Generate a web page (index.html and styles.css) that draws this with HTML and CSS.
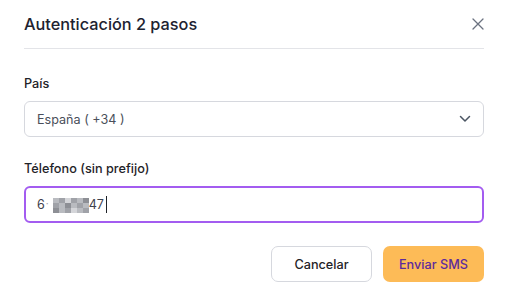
FILE: index.html
```html
<!DOCTYPE html>
<html lang="es">
<head>
    <meta charset="UTF-8">
    <meta name="viewport" content="width=device-width, initial-scale=1.0">
    <title>Autenticación 2 pasos</title>
    <link rel="stylesheet" href="styles.css">
</head>
<body>
    <div class="modal">
        <div class="modal-header">
            <h2>Autenticación 2 pasos</h2>
            <button class="close-btn" aria-label="Cerrar">
                <svg width="12" height="12" viewBox="0 0 12 12"><path d="M1 1L11 11M11 1L1 11" stroke="#6b7280" stroke-width="1.3" stroke-linecap="round"/></svg>
            </button>
        </div>
        <div class="modal-body">
            <div class="form-group">
                <label>País</label>
                <div class="select">
                    <span>España ( +34 )</span>
                    <svg width="12" height="8" viewBox="0 0 12 8"><path d="M1.5 1.5L6 6L10.5 1.5" fill="none" stroke="#4b5563" stroke-width="1.5" stroke-linecap="round" stroke-linejoin="round"/></svg>
                </div>
            </div>
            <div class="form-group">
                <label>Télefono (sin prefijo)</label>
                <div class="input focused">
                    <span class="digit">6</span><span class="dot">·</span>
                    <span class="mosaic">
                        <i class="m2"></i><i class="m3"></i><i class="m1"></i><i class="m3"></i><i class="m2"></i><i class="m4"></i>
                        <i class="m3"></i><i class="m2"></i><i class="m4"></i><i class="m2"></i><i class="m3"></i><i class="m2"></i>
                        <i class="m4"></i><i class="m2"></i><i class="m3"></i><i class="m1"></i><i class="m2"></i><i class="m3"></i>
                    </span>
                    <span class="digits">47</span><span class="caret"></span>
                </div>
            </div>
        </div>
        <div class="modal-footer">
            <button class="btn btn-secondary">Cancelar</button>
            <button class="btn btn-primary">Enviar SMS</button>
        </div>
    </div>
</body>
</html>
```

FILE: styles.css
```css
body {
    margin: 0;
    font-family: Inter, "Noto Sans", sans-serif;
    background-color: #fff;
    color: #1f2328;
}
.modal {
    width: 460px;
    padding: 0 26px 0 24px;
}
.modal-header {
    display: flex;
    align-items: center;
    justify-content: space-between;
    height: 48px;
    border-bottom: 1px solid #e3e4e8;
}
.modal-header h2 {
    margin: 0;
    font-size: 16.3px;
    font-weight: 500;
    color: #1d2230;
}
.close-btn {
    border: none;
    background: none;
    padding: 0;
    width: 12px;
    height: 12px;
    display: flex;
}
.modal-body {
    padding-top: 26px;
}
.form-group {
    margin-bottom: 23px;
}
.form-group label {
    display: block;
    font-size: 12.7px;
    font-weight: 500;
    color: #1f2328;
    margin-bottom: 9px;
    line-height: 17px;
}
.select, .input {
    box-sizing: border-box;
    height: 36px;
    border: 1px solid #d6d8de;
    border-radius: 6px;
    display: flex;
    align-items: center;
    padding: 0 12px;
    font-size: 12.6px;
    color: #4a4f5a;
}
.select {
    justify-content: space-between;
}
.input.focused {
    height: 37px;
    border: 2px solid #a35cf0;
    padding: 0 11px;
}
.digit {
    color: #3d424d;
}
.dot {
    color: #9a9ea8;
    font-size: 10px;
    margin: 0 4px 4px 1px;
}
.mosaic {
    display: grid;
    grid-template-columns: repeat(6, 6px);
    grid-template-rows: repeat(3, 5px);
    margin-top: 1px;
}
.mosaic i { display: block; }
.m1 { background: #d4d5d9; }
.m2 { background: #b9bbc0; }
.m3 { background: #a0a2a8; }
.m4 { background: #8d8f95; }
.digits {
    color: #3d424d;
}
.caret {
    width: 1px;
    height: 17px;
    background: #1f2328;
    margin-left: 2px;
}
.modal-footer {
    display: flex;
    justify-content: flex-end;
    gap: 11px;
}
.btn {
    height: 36px;
    width: 101px;
    border-radius: 7px;
    font-family: Inter, "Noto Sans", sans-serif;
    font-size: 12.7px;
    font-weight: 500;
}
.btn-secondary {
    background: #fff;
    border: 1px solid #d6d8de;
    color: #1f2328;
}
.btn-primary {
    background: #fdbb57;
    border: none;
    color: #5d2a9c;
}
```
